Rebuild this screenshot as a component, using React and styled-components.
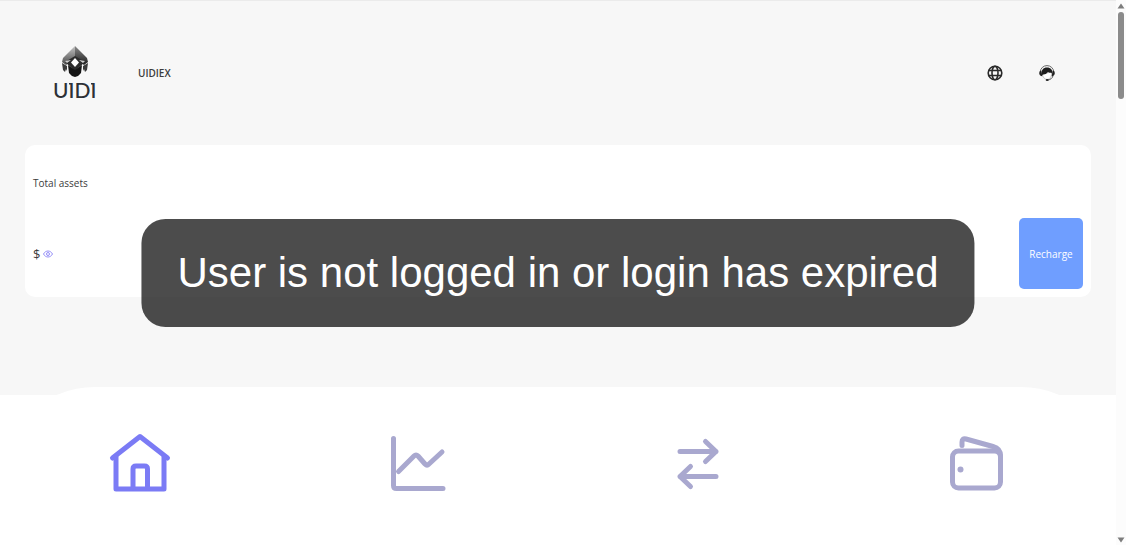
import React, { useState } from "react";
import styled, { createGlobalStyle } from "styled-components";

const navItems = [
  { key: "home", label: "Home" },
  { key: "market", label: "Market" },
  { key: "trade", label: "Trade" },
  { key: "wallet", label: "Wallet" },
];

function Logo() {
  return (
    <svg width="46" height="56" viewBox="0 0 46 56" role="img" aria-label="UIDI">
      <defs>
        <linearGradient id="metal" x1="0" y1="0" x2="0" y2="1">
          <stop offset="0" stopColor="#c4c4c4" />
          <stop offset="1" stopColor="#4a4a4a" />
        </linearGradient>
        <linearGradient id="metalDark" x1="0" y1="0" x2="0" y2="1">
          <stop offset="0" stopColor="#8a8a8a" />
          <stop offset="1" stopColor="#1c1c1c" />
        </linearGradient>
      </defs>
      <path d="M22 1 L10 13 L9 17 L13 20 L22 13Z" fill="url(#metal)" />
      <path d="M22 1 L34 13 L35 17 L31 20 L22 13Z" fill="url(#metalDark)" />
      <path d="M22 11 L12 17 L22 26 L32 17Z" fill="#2c2c2c" />
      <path d="M12 16 L18 15 L14 18Z M32 16 L26 15 L30 18Z" fill="#d0d0d0" />
      <path d="M22 13 L26 17.500 L22 22 L18 17.500Z" fill="#fff" />
      <path d="M9 18 L14 21 L14 26 L13 24 L12 27 L10 25Z" fill="#3a3a3a" />
      <path d="M35 18 L30 21 L30 26 L31 24 L32 27 L34 25Z" fill="#3a3a3a" />
      <path d="M15 20 L22 25 L29 20 L28 28 L25 31 L22 32 L19 31 L16 28Z" fill="#151515" />
      <text x="0" y="53" fontFamily="Lato, sans-serif" fontSize="21" fontWeight="500" fill="#2d3036">
        UIDI
      </text>
      <path d="M16 38.800 H19 M38 38.800 H41" stroke="#2d3036" strokeWidth="1.500" />
    </svg>
  );
}

function GlobeIcon() {
  return (
    <svg width="16" height="16" viewBox="0 0 16 16" fill="none" stroke="#2a2a2a" strokeWidth="1.6" aria-hidden="true">
      <circle cx="8" cy="8" r="6.8" />
      <ellipse cx="8" cy="8" rx="3" ry="6.8" />
      <path d="M1.5 5.5H14.5M1.5 10.5H14.5" />
    </svg>
  );
}

function ServiceIcon() {
  return (
    <svg width="16" height="16" viewBox="0 0 16 16" aria-hidden="true">
      <path d="M1.3 7 A6.7 6.4 0 0 1 14.7 7" fill="none" stroke="#666" strokeWidth="1" />
      <path d="M3.4 9 L12.6 7 C13 11 11 14.4 8 14.4 C5.4 14.4 3.6 12 3.4 9Z" fill="#fff" stroke="#999" strokeWidth="0.5" />
      <path d="M2.6 10.5 C1.8 4.800 4.400 2.400 8 2.400 S14 4.800 13.400 9 L12 7.400 C11 7.900 10 7.600 9 7 C7.500 9 5.500 9.600 4 9.400Z" fill="#1c1c1c" />
      <path d="M0.200 8 Q0.200 5.800 2.200 5.500 L3.400 11.200 Q0.200 11 0.200 8Z" fill="#222" />
      <path d="M15.800 8 Q15.800 5.800 13.800 5.500 L12.600 11.200 Q15.800 11 15.800 8Z" fill="#222" />
      <path d="M14 10.800 C13.400 13.200 11.500 14.600 9 15" fill="none" stroke="#444" strokeWidth="0.900" />
      <ellipse cx="8.200" cy="15" rx="1.500" ry="0.900" fill="#222" />
    </svg>
  );
}

function EyeIcon() {
  return (
    <svg width="10" height="8" viewBox="0 0 10 8" fill="none" stroke="#7b74f5" strokeWidth="0.8" aria-hidden="true">
      <path d="M0.5 4 C2.6 0 7.4 0 9.5 4 C7.4 8 2.6 8 0.5 4Z" />
      <circle cx="5" cy="4" r="1.5" />
    </svg>
  );
}

function NavIcon({ name }) {
  return (
    <NavSvg viewBox="0 0 64 64" aria-hidden="true">
      {name === "home" && (
        <>
          <path d="M4.500 27 L32 5.500 L59.500 27" />
          <path d="M8 26 V58 H56 V26" />
          <path d="M25 57 V38 Q25 35 28 35 H36.500 Q39.500 35 39.500 38 V57" />
        </>
      )}
      {name === "market" && (
        <>
          <path d="M6.500 7.500 V54.500 Q6.500 57.500 9.500 57.500 H56" />
          <path d="M11.500 40.500 L27 25 Q29 23 31 25 L38 33 Q40 35 42 33 L55 21" />
        </>
      )}
      {name === "trade" && (
        <>
          <path d="M14 20.500 H50 M39.500 10.500 L50 20.500 L39.500 30.500" />
          <path d="M50 45.500 H14 M24.500 35.500 L14 45.500 L24.500 55.500" />
        </>
      )}
      {name === "wallet" && (
        <>
          <rect x="7.500" y="20" width="48" height="37" rx="6" />
          <path d="M17 14.500 V11 Q17 7 21 8 L48 15.500 Q55.500 17.500 55.500 25" />
          <circle cx="15.500" cy="38.500" r="3" className="dot" />
        </>
      )}
    </NavSvg>
  );
}

export default function App() {
  const [active, setactive] = useState("home");
  return (
    <>
      <GlobalStyle />
      <Shell>
        <Main>
          <Assets>
            <Header>
              <Logo />
              <Brand>UIDIEX</Brand>
              <HeaderActions>
                <IconButton aria-label="Language">
                  <GlobeIcon />
                </IconButton>
                <IconButton aria-label="Customer service">
                  <ServiceIcon />
                </IconButton>
              </HeaderActions>
            </Header>
            <Card>
              <CardTitle>Total assets</CardTitle>
              <Balance>
                <Currency>$</Currency>
                <IconButton aria-label="Show balance">
                  <EyeIcon />
                </IconButton>
                <Recharge>Recharge</Recharge>
              </Balance>
            </Card>
          </Assets>
          <Tabbar>
            {navItems.map((item) => (
              <Tab
                key={item.key}
                aria-label={item.label}
                $active={active === item.key}
                onClick={() => setactive(item.key)}
              >
                <NavIcon name={item.key} />
              </Tab>
            ))}
          </Tabbar>
          <Toast role="alert">User is not logged in or login has expired</Toast>
        </Main>
        <Scrollbar>
          <Arrow viewBox="0 0 8 6">
            <path d="M4 0.500 L7.500 5.500 H0.500Z" />
          </Arrow>
          <Thumb />
          <Arrow viewBox="0 0 8 6">
            <path d="M4 5.500 L7.500 0.500 H0.500Z" />
          </Arrow>
        </Scrollbar>
      </Shell>
    </>
  );
}

const GlobalStyle = createGlobalStyle`
  * {
    box-sizing: border-box;
  }
  body {
    margin: 0;
    background: #fff;
    color: #3c3c3c;
    font-family: "Open Sans", "Noto Sans", sans-serif;
    font-size: 10px;
  }
  button {
    border: 0;
    padding: 0;
    background: none;
    color: inherit;
    font: inherit;
    cursor: pointer;
  }
  svg {
    display: block;
  }
`;
const Shell = styled.div`
  display: flex;
  height: 100vh;
  overflow: hidden;
`;
const Main = styled.main`
  position: relative;
  flex: 1;
  display: flex;
  flex-direction: column;
`;
const Assets = styled.section`
  flex: 1;
  padding: 0 25px;
  background: #f7f7f7;
  border-top: 1px solid #ebebeb;
`;
const Header = styled.header`
  display: flex;
  align-items: center;
  height: 144px;
  padding: 0 36px 0 28px;
`;
const Brand = styled.span`
  margin-left: 39px;
  font-weight: 600;
`;
const HeaderActions = styled.div`
  display: flex;
  gap: 36px;
  margin-left: auto;
`;
const IconButton = styled.button`
  display: flex;
`;
const Card = styled.div`
  padding: 8px;
  border-radius: 10px;
  background: #fff;
`;
const CardTitle = styled.h2`
  margin: 0 0 4px;
  font-size: 10px;
  font-weight: 400;
  line-height: 61px;
`;
const Balance = styled.div`
  display: flex;
  align-items: center;
  gap: 3px;
  height: 71px;
`;
const Currency = styled.span`
  font-size: 13px;
`;
const Recharge = styled.button`
  align-self: stretch;
  width: 64px;
  margin-left: auto;
  border-radius: 5px;
  background: #6f9eff;
  color: #fff;
`;
const Tabbar = styled.nav`
  position: relative;
  display: grid;
  grid-template-columns: repeat(4, 1fr);
  height: 158px;
  margin-top: -8px;
  padding-bottom: 6px;
  border-radius: 95px 95px 0 0;
  background: #fff;
`;
const Tab = styled.button`
  display: flex;
  align-items: center;
  justify-content: center;
  color: ${(props) => (props.$active ? "#7b7bf5" : "#a9a8cf")};
`;
const NavSvg = styled.svg`
  width: 64px;
  height: 64px;
  fill: none;
  stroke: currentColor;
  stroke-width: 5;
  stroke-linecap: round;
  stroke-linejoin: round;
  .dot {
    fill: currentColor;
    stroke: none;
  }
`;
/* message floats over the page, centred on the content column */
const Toast = styled.div`
  position: absolute;
  top: 50%;
  left: 50%;
  transform: translate(-50%, -50%);
  padding: 30px 36px;
  border-radius: 24px;
  background: rgba(0, 0, 0, 0.7);
  color: #fff;
  font-family: "Liberation Sans", Arial, sans-serif;
  font-size: 42px;
  line-height: 48px;
  white-space: nowrap;
`;
const Scrollbar = styled.div`
  display: flex;
  flex-direction: column;
  align-items: center;
  gap: 3px;
  width: 10px;
  padding: 3px 0 2px;
  background: #fcfcfc;
`;
const Thumb = styled.div`
  width: 6px;
  height: 87px;
  margin-bottom: auto;
  border-radius: 3px;
  background: #8b8b8b;
`;
const Arrow = styled.svg`
  width: 8px;
  height: 6px;
  fill: #7d7d7d;
`;
